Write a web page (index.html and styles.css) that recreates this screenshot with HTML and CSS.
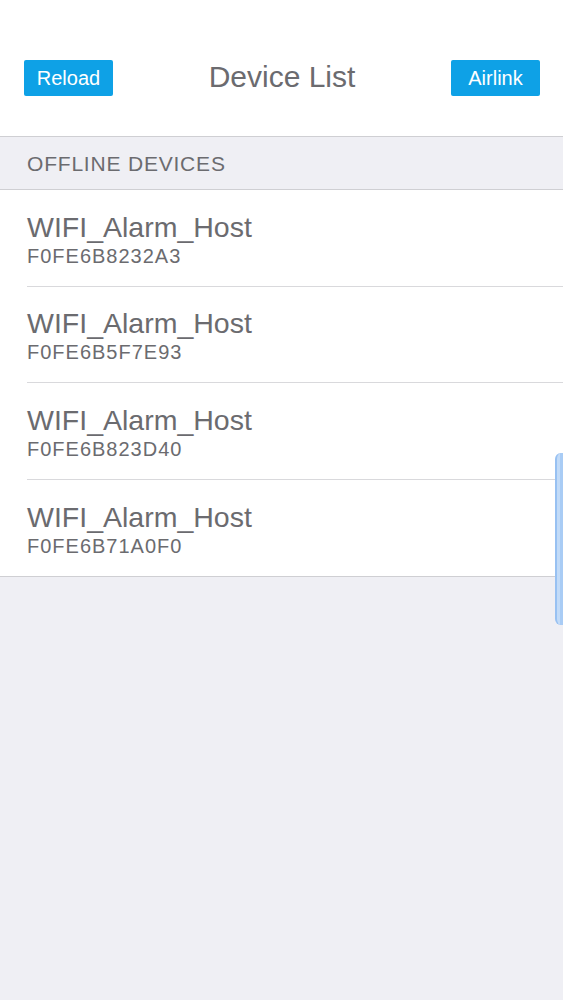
FILE: index.html
```html
<!DOCTYPE html>
<html dir="ltr" lang="en">
<head>
	<title>Device List</title>
	<meta http-equiv="content-type" content="text/html; charset=utf-8" />
	<meta name="viewport" content="width=device-width, initial-scale=1.0">
	<link rel="stylesheet" href="styles.css">
</head>
<body>
	<div id="header">
		<button class="navbtn">Reload</button>
		<h1 id="title">Device List</h1>
		<button class="navbtn">Airlink</button>
	</div>
	<div class="section">OFFLINE DEVICES</div>
	<ul id="devices">
		<li class="device"><div class="cell"><span class="name">WIFI_Alarm_Host</span><span class="mac">F0FE6B8232A3</span></div></li>
		<li class="device"><div class="cell"><span class="name">WIFI_Alarm_Host</span><span class="mac">F0FE6B5F7E93</span></div></li>
		<li class="device"><div class="cell"><span class="name">WIFI_Alarm_Host</span><span class="mac">F0FE6B823D40</span></div></li>
		<li class="device"><div class="cell"><span class="name">WIFI_Alarm_Host</span><span class="mac">F0FE6B71A0F0</span></div></li>
	</ul>
	<div id="edge"></div>
</body>
</html>
```

FILE: styles.css
```css
html, body { margin: 0; padding: 0; }
body { position: relative; min-height: 1000px; background-color: #efeff4; font-family: "Liberation Sans", Arial, sans-serif; color: #6b6b6f; }

#header { display: flex; align-items: center; justify-content: space-between; box-sizing: border-box; height: 137px; padding: 60px 23px 40px 24px; background-color: #fff; border-bottom: 1px solid #cfcfd3; }
#title { margin: 0 0 3px 0; font-size: 30px; font-weight: normal; color: #6b6b6f; }
.navbtn { height: 36px; width: 89px; padding: 0; border: 0; border-radius: 2px; background-color: #0ea1e6; color: #fff; font-family: inherit; font-size: 20px; }

.section { box-sizing: border-box; height: 53px; padding: 2px 27px 0; line-height: 50px; font-size: 21px; letter-spacing: 0.8px; color: #6b6b6f; border-bottom: 1px solid #cfcfd3; }

#devices { list-style: none; margin: 0; padding: 0; background-color: #fff; border-bottom: 1px solid #cfcfd3; }
.device { padding-left: 27px; }
.cell { display: flex; flex-direction: column; justify-content: center; box-sizing: border-box; height: 96.5px; padding-top: 2px; border-bottom: 1px solid #d9d9dc; }
.device:last-child .cell { border-bottom: 0; }
.name { font-size: 28.5px; line-height: 32px; }
.mac { margin-top: 2px; font-size: 20px; line-height: 22px; letter-spacing: 1px; }

/* slide-out handle at the right edge */
#edge { position: absolute; top: 453px; right: 0; box-sizing: border-box; width: 8px; height: 172px; border-radius: 6px 0 0 6px; background-color: #c2dbf8; border-left: 2px solid #98c1f2; box-shadow: inset -3px 0 0 #a9ccf5; }
```
